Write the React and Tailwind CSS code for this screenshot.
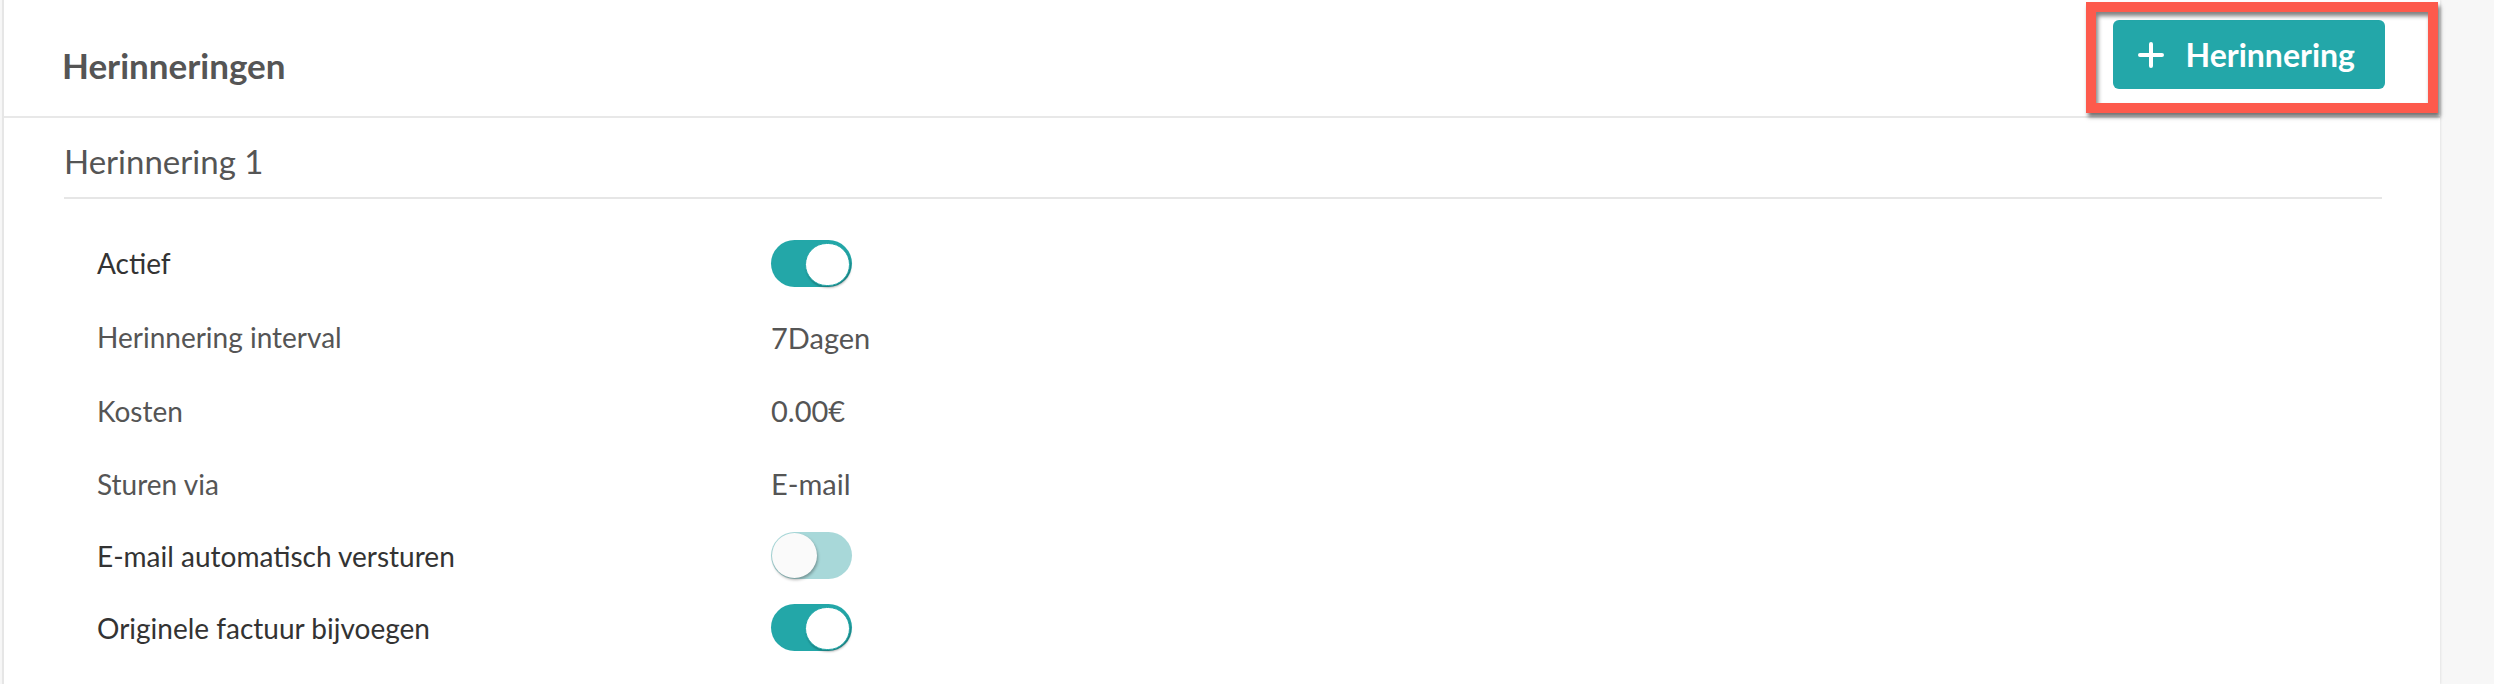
import React from 'react';

const rows = [
    { label: 'Actief', toggle: true, on: true, h: 'h-[74px]' },
    { label: 'Herinnering interval', value: '7Dagen', h: 'h-[74px]' },
    { label: 'Kosten', value: '0.00€', h: 'h-[73px]' },
    { label: 'Sturen via', value: 'E-mail', h: 'h-[73px]' },
    { label: 'E-mail automatisch versturen', toggle: true, on: false, h: 'h-[71px]' },
    { label: 'Originele factuur bijvoegen', toggle: true, on: true, h: 'h-[73px]' },
];

const Toggle = ({ on }) => (
    <div className={`relative w-[81px] h-[47px] rounded-full ${on ? 'bg-[#23a7a8]' : 'bg-[#a8d8d9]'}`}>
        {on ? (
            <div className="absolute right-[2px] top-[3px] w-[45px] h-[43px] rounded-full bg-white border border-[#23a7a8] shadow-[1px_2px_2px_rgba(0,0,0,0.25)]" />
        ) : (
            <div className="absolute left-[1px] top-[1px] w-[45px] h-[45px] rounded-full bg-[#fafafa] shadow-[1px_2px_3px_rgba(0,0,0,0.3)]" />
        )}
    </div>
);

const PlusIcon = () => (
    <svg width="26" height="26" viewBox="0 0 26 26" fill="none" stroke="white" strokeWidth="4" strokeLinecap="round">
        <path d="M13 2v22M2 13h22" />
    </svg>
);

export default function App() {
    return (
        <div className="relative w-[2494px] h-[684px] overflow-hidden bg-[#f7f7f7] font-['Lato',sans-serif]">
            <div className="ml-[2px] w-[2438px] h-full bg-white border-l-2 border-[#e6e6e6] shadow-[1px_0_2px_rgba(0,0,0,0.08)]">
                {/* header */}
                <div className="flex items-start justify-between h-[118px] border-b-2 border-[#e8e8e8]">
                    <h1 className="pl-[58px] pt-[48px] text-[35px] leading-none font-bold text-[#555]">Herinneringen</h1>
                    <button className="mt-[20px] mr-[55px] h-[69px] flex items-center gap-[21px] pl-[25px] pr-[30px] rounded-[6px] bg-[#23a7a9] text-white text-[32px] leading-none font-bold">
                        <PlusIcon />
                        <span>Herinnering</span>
                    </button>
                </div>

                <div className="pl-[60px] pr-[58px]">
                    <div className="pt-[27px] pb-[19px] border-b-2 border-[#e6e6e6]">
                        <h2 className="text-[33px] leading-none text-[#555]">Herinnering 1</h2>
                    </div>

                    <div className="pt-[27px] pl-[33px]">
                        {rows.map((row) => (
                            <div key={row.label} className={`flex items-center ${row.h}`}>
                                <div className={`w-[674px] text-[28px] leading-none ${row.toggle ? 'text-[#333]' : 'text-[#555]'}`}>
                                    {row.label}
                                </div>
                                {row.toggle ? (
                                    <Toggle on={row.on} />
                                ) : (
                                    <div className="text-[29px] leading-none text-[#555]">{row.value}</div>
                                )}
                            </div>
                        ))}
                    </div>
                </div>
            </div>

            {/* annotation */}
            <div className="absolute left-[2086px] top-[2px] w-[352px] h-[111px] border-[10px] border-[#fd5a4c] shadow-[2px_4px_4px_rgba(0,0,0,0.55),inset_2px_4px_4px_rgba(0,0,0,0.5)]" />
        </div>
    );
}
